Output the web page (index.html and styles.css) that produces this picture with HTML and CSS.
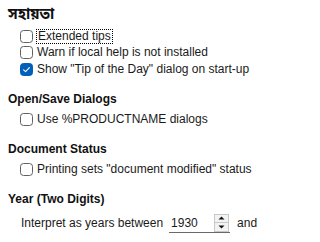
FILE: index.html
```html
<!DOCTYPE html>
<html>
<head>
<meta charset="utf-8">
<link rel="stylesheet" href="styles.css">
</head>
<body>
<div class="page">
  <section class="group">
    <h2 class="heading heading-bn">সহায়তা</h2>
    <div class="rows">
      <label class="row"><span class="cb"></span><span class="txt focus">Extended tips</span></label>
      <label class="row"><span class="cb"></span><span class="txt">Warn if local help is not installed</span></label>
      <label class="row"><span class="cb checked"><svg viewBox="0 0 13 13" width="13" height="13"><path d="M3.6 6.8 L5.6 8.7 L9.4 4.6" fill="none" stroke="#fff" stroke-width="1.1" stroke-linecap="round" stroke-linejoin="round"/></svg></span><span class="txt">Show "Tip of the Day" dialog on start-up</span></label>
    </div>
  </section>
  <section class="group">
    <h2 class="heading">Open/Save Dialogs</h2>
    <div class="rows">
      <label class="row"><span class="cb"></span><span class="txt">Use %PRODUCTNAME dialogs</span></label>
    </div>
  </section>
  <section class="group">
    <h2 class="heading">Document Status</h2>
    <div class="rows">
      <label class="row"><span class="cb"></span><span class="txt">Printing sets "document modified" status</span></label>
    </div>
  </section>
  <section class="group">
    <h2 class="heading">Year (Two Digits)</h2>
    <div class="year-row">
      <span class="txt">Interpret as years between</span>
      <div class="spin">
        <span class="spin-value">1930</span>
        <div class="spin-btns">
          <span class="spin-btn"><svg viewBox="0 0 7 4" width="7" height="4"><path d="M0.5 3.5 L3.5 0.5 L6.5 3.5 Z" fill="#111"/></svg></span>
          <span class="spin-btn"><svg viewBox="0 0 7 4" width="7" height="4"><path d="M0.5 0.5 L3.5 3.5 L6.5 0.5 Z" fill="#111"/></svg></span>
        </div>
      </div>
      <span class="txt">and</span>
    </div>
  </section>
</div>
</body>
</html>
```
FILE: styles.css
```css
html, body {
  margin: 0;
  padding: 0;
  background: #ffffff;
}
body {
  font-family: "Liberation Sans", "Noto Sans Bengali", "Noto Sans", sans-serif;
  font-size: 12px;
  color: #1a1a1a;
  width: 267px;
  height: 242px;
  overflow: hidden;
}
.page {
  padding: 8px 0 0 8px;
  display: flex;
  flex-direction: column;
  gap: 13.5px;
}
.group {
  display: flex;
  flex-direction: column;
  gap: 4px;
}
.heading {
  margin: 0;
  font-size: 12px;
  font-weight: bold;
  line-height: 16px;
  height: 16px;
  color: #111;
}
.heading-bn {
  font-family: "Noto Sans Bengali", "Noto Serif Bengali", "Lohit Bengali", "Liberation Sans", sans-serif;
  font-size: 15px;
  line-height: 17px;
  height: 17px;
  margin-top: -1px;
}
.rows {
  display: flex;
  flex-direction: column;
  padding-left: 12px;
}
.row {
  display: flex;
  align-items: center;
  height: 16.5px;
  gap: 4px;
}
.cb {
  box-sizing: border-box;
  width: 13px;
  height: 13px;
  border: 1px solid #616161;
  border-radius: 3.5px;
  background: #fff;
  display: flex;
  align-items: center;
  justify-content: center;
  flex: none;
}
.cb.checked {
  background: #005fb8;
  border-color: #005fb8;
}
.cb svg {
  display: block;
  margin: -1px;
}
.txt {
  line-height: 13px;
  white-space: nowrap;
  color: #1a1a1a;
}
.focus {
  outline: 1px dotted #000;
  outline-offset: 0;
  padding: 0 1px;
}
.year-row {
  display: flex;
  align-items: center;
  padding-left: 13px;
  height: 20px;
  margin-top: 2px;
}
.spin {
  display: flex;
  align-items: center;
  box-sizing: border-box;
  width: 61px;
  height: 20px;
  margin-left: 6px;
  margin-right: 7px;
  border-bottom: 1px solid #6a6a6a;
  background: #fff;
  padding: 0 1px 0 1px;
}
.spin-value {
  flex: 1;
  padding-left: 1px;
}
.spin-btns {
  box-sizing: border-box;
  width: 15px;
  height: 18px;
  border: 1px solid #c8c8c8;
  background: #f3f3f3;
  display: flex;
  flex-direction: column;
}
.spin-btn {
  flex: 1;
  display: flex;
  align-items: center;
  justify-content: center;
}
.spin-btn + .spin-btn {
  border-top: 1px solid #c8c8c8;
}
.spin-btn svg {
  display: block;
}
```
